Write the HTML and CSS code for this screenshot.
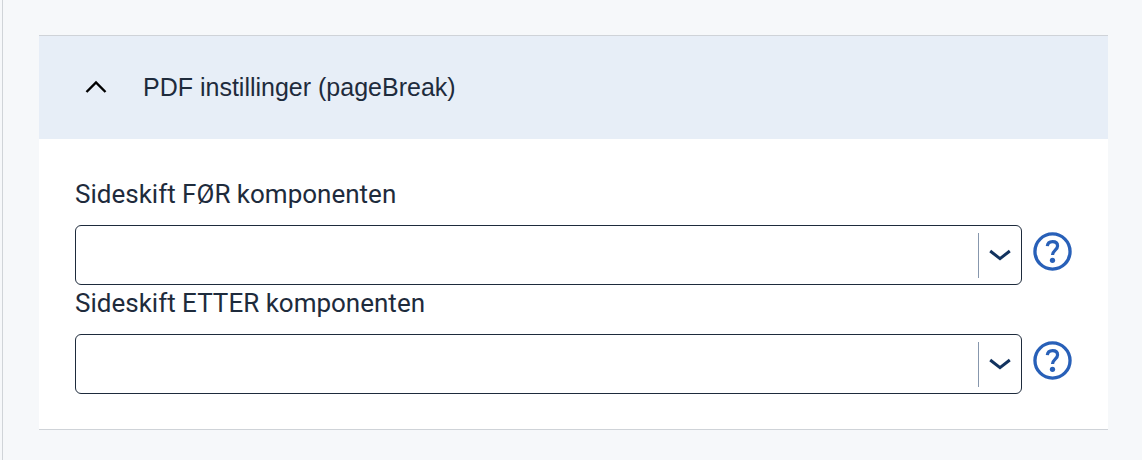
FILE: index.html
```html
<!DOCTYPE html>
<html lang="nb">
<head>
<meta charset="utf-8">
<meta name="viewport" content="width=device-width, initial-scale=1">
<title>PDF instillinger</title>
<link rel="stylesheet" href="styles.css">
</head>
<body>
<main class="panel">
  <section class="accordion">
    <button class="accordion-header" type="button" aria-expanded="true" aria-controls="pdf-settings">
      <svg class="accordion-icon" viewBox="0 0 22 16" fill="none" stroke="currentColor" stroke-width="2.400" aria-hidden="true"><path d="M1.500 12 11 2.400 20.500 12"/></svg>
      <span>PDF instillinger (pageBreak)</span>
    </button>
    <div class="accordion-content" id="pdf-settings">
      <div class="field">
        <label class="field-label" for="break-before">Sideskift FØR komponenten</label>
        <div class="field-row">
          <div class="select">
            <select class="select-input" id="break-before"><option value=""></option></select>
            <span class="select-arrow"><svg class="select-icon" viewBox="0 0 22 12" fill="none" stroke="currentColor" stroke-width="3" aria-hidden="true"><path d="M1.200 2 11 9.700 20.800 2"/></svg></span>
          </div>
          <button class="help" type="button" aria-label="Hjelp">
            <svg class="help-icon" viewBox="0 0 40 40" fill="none" stroke="currentColor" aria-hidden="true"><circle cx="20" cy="20" r="18" stroke-width="3.400"/><path d="M14.700 14.500C15 11.300 17 9.800 20 9.800c3.200 0 5.200 1.800 5.200 4.500 0 4.200-5.200 4.400-5.200 9.400" stroke-width="3.300"/><circle cx="20" cy="29" r="2.700" fill="currentColor" stroke="none"/></svg>
          </button>
        </div>
      </div>
      <div class="field">
        <label class="field-label" for="break-after">Sideskift ETTER komponenten</label>
        <div class="field-row">
          <div class="select">
            <select class="select-input" id="break-after"><option value=""></option></select>
            <span class="select-arrow"><svg class="select-icon" viewBox="0 0 22 12" fill="none" stroke="currentColor" stroke-width="3" aria-hidden="true"><path d="M1.200 2 11 9.700 20.800 2"/></svg></span>
          </div>
          <button class="help" type="button" aria-label="Hjelp">
            <svg class="help-icon" viewBox="0 0 40 40" fill="none" stroke="currentColor" aria-hidden="true"><circle cx="20" cy="20" r="18" stroke-width="3.400"/><path d="M14.700 14.500C15 11.300 17 9.800 20 9.800c3.200 0 5.200 1.800 5.200 4.500 0 4.200-5.200 4.400-5.200 9.400" stroke-width="3.300"/><circle cx="20" cy="29" r="2.700" fill="currentColor" stroke="none"/></svg>
          </button>
        </div>
      </div>
    </div>
  </section>
</main>
</body>
</html>
```
FILE: styles.css
```css
* {
  box-sizing: border-box;
}

body {
  margin: 0;
  background: #f6f8fa;
  color: #1e2b3c;
  font-family: Roboto, "Liberation Sans", sans-serif;
}

.panel {
  min-height: 100vh;
  margin-left: 2px;
  padding: 35px 34px 30px 36px;
  border-left: 1px solid #d0d4d8;
}

.accordion {
  border-top: 1px solid #cfd3d8;
  border-bottom: 1px solid #cfd3d8;
  background: #fff;
}

.accordion-header {
  display: flex;
  align-items: center;
  gap: 36px;
  width: 100%;
  padding: 34px 46px;
  border: 0;
  background: #e7eef7;
  color: #1e2b3c;
  font: 25px/35px "Liberation Sans", Arial, sans-serif;
  text-align: left;
  cursor: pointer;
}

.accordion-icon {
  width: 22px;
  height: 16px;
  color: #000;
}

.accordion-content {
  padding: 37px 36px 35px;
}

.field-label {
  display: block;
  padding-bottom: 13px;
  font-size: 26px;
  line-height: 36px;
}

.field-row {
  display: flex;
  align-items: flex-start;
  gap: 11px;
}

.select {
  display: grid;
  flex: 1;
}

.select-input,
.select-arrow {
  grid-area: 1 / 1;
}

.select-input {
  width: 100%;
  height: 60px;
  padding: 0 56px 0 16px;
  border: 1px solid #1e2b3c;
  border-radius: 6px;
  appearance: none;
  background: #fff;
  color: inherit;
  font: inherit;
  font-size: 25px;
}

.select-arrow {
  display: flex;
  align-items: center;
  place-self: center end;
  height: 45px;
  margin-right: 11px;
  padding-left: 10px;
  border-left: 1px solid #8797ad;
  color: #12335f;
  pointer-events: none;
}

.select-icon {
  width: 22px;
  height: 12px;
}

.help {
  display: flex;
  margin-top: 7px;
  padding: 0;
  border: 0;
  background: none;
  color: #2860b8;
  cursor: pointer;
}

.help-icon {
  width: 39px;
  height: 39px;
}
```
